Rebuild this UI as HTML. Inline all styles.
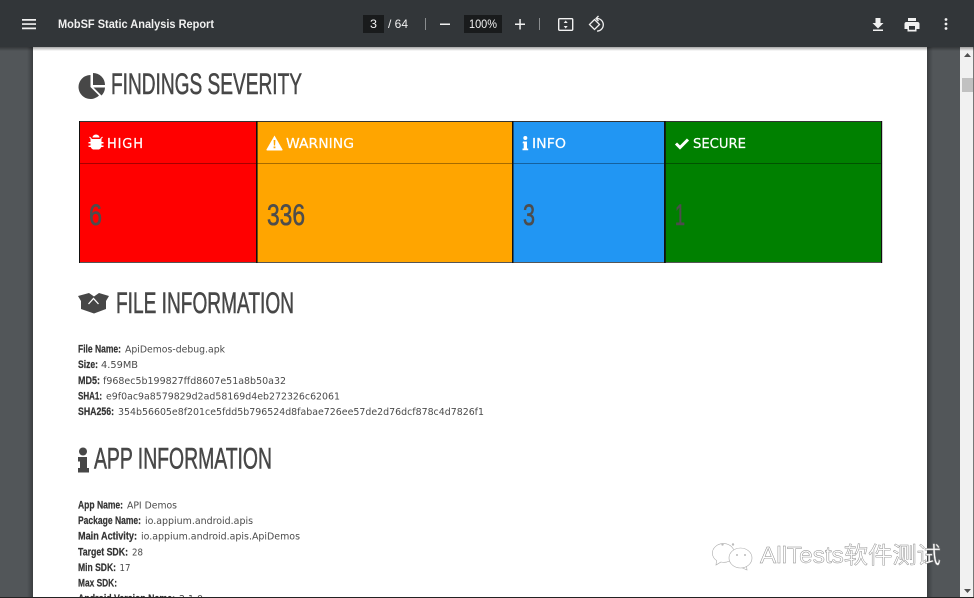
<!DOCTYPE html>
<html><head><meta charset="utf-8"><title>MobSF Static Analysis Report</title>
<style>
html,body{margin:0;padding:0;width:974px;height:598px;overflow:hidden;background:#525659}
svg{display:block}
.h{font-family:"Liberation Sans",sans-serif;font-size:30px;fill:#474747;stroke:#474747;stroke-width:.55}
.n{font-family:"Liberation Sans",sans-serif;font-size:30px;fill:#4d4d4d;stroke:#4d4d4d;stroke-width:.6}
.l{font-family:"Liberation Sans",sans-serif;font-weight:bold;font-size:11px;fill:#333;stroke:#333;stroke-width:.2}
.v{font-family:"DejaVu Sans",sans-serif;font-size:10px;fill:#4a4a4a}
.c{font-family:"DejaVu Sans",sans-serif;font-size:13px;fill:#fff;stroke:#fff;stroke-width:.2}
.t{font-family:"Liberation Sans",sans-serif;font-size:12px;fill:#f1f1f1}
</style></head><body>
<svg width="974" height="598" viewBox="0 0 974 598" xmlns="http://www.w3.org/2000/svg">
<defs>
<linearGradient id="s" x1="0" x2="0" y1="0" y2="1"><stop offset="0" stop-color="#000" stop-opacity=".35"/><stop offset="1" stop-color="#000" stop-opacity="0"/></linearGradient>
<linearGradient id="g1" x1="0" x2="1" y1="0" y2="0"><stop offset="0" stop-color="#000" stop-opacity="0"/><stop offset="1" stop-color="#000" stop-opacity=".28"/></linearGradient>
<linearGradient id="g2" x1="0" x2="1" y1="0" y2="0"><stop offset="0" stop-color="#000" stop-opacity=".28"/><stop offset="1" stop-color="#000" stop-opacity="0"/></linearGradient>
</defs>
<rect width="974" height="598" fill="#525659"/>
<rect x="27" y="47" width="6" height="551" fill="url(#g1)"/>
<rect x="927" y="47" width="6" height="551" fill="url(#g2)"/>
<rect x="33" y="47" width="894" height="551" fill="#fff"/>
<rect x="960" y="47" width="14" height="551" fill="#f1f1f1"/>
<rect x="962" y="78" width="12" height="14" fill="#c1c1c1"/>
<path d="M964 57h7l-3.500-4z" fill="#505050"/>
<path d="M964 589h7l-3.500 4z" fill="#505050"/>
<rect x="973" y="0" width="1" height="598" fill="#777"/>

<rect x="0" y="47" width="974" height="4" fill="url(#s)"/>
<rect width="974" height="47" fill="#323639"/>

<!-- toolbar -->
<path d="M22 19h14v1.700H22zM22 23.200h14v1.700H22zM22 27.500h14v1.700H22z" fill="#f1f1f1"/>
<text x="58" y="28" class="t" font-weight="bold" textLength="156" lengthAdjust="spacingAndGlyphs">MobSF Static Analysis Report</text>
<rect x="363" y="15" width="21" height="18" fill="#191b1c"/>
<text x="370" y="28" class="t" textLength="7" lengthAdjust="spacingAndGlyphs">3</text>
<text x="388" y="28" class="t" textLength="20" lengthAdjust="spacingAndGlyphs">/ 64</text>
<rect x="425" y="18" width="1" height="12" fill="#8a8d8f"/>
<rect x="440" y="23.500" width="10" height="1.500" fill="#f1f1f1"/>
<rect x="464" y="15" width="38" height="18" fill="#191b1c"/>
<text x="469" y="28" class="t" textLength="28" lengthAdjust="spacingAndGlyphs">100%</text>
<path d="M515 23.500h10v1.500h-10zM519.300 19h1.500v10.500h-1.500z" fill="#f1f1f1"/>
<rect x="539" y="18" width="1" height="12" fill="#8a8d8f"/>
<rect x="558.700" y="18.700" width="14" height="11.600" rx="1" fill="none" stroke="#f1f1f1" stroke-width="1.400"/>
<path d="M565.700 20.500l-2 2.500h4zM565.700 28.500l-2-2.500h4z" fill="#f1f1f1"/>
<path d="M598.500 16l-2.500 2.500 2.500 2.500" fill="none" stroke="#f1f1f1" stroke-width="1.300"/>
<path d="M597 18.500a6.300 6.300 0 0 1 0 12.600" fill="none" stroke="#f1f1f1" stroke-width="1.300"/>
<path d="M594.500 19.500l5 5-5 5-5-5z" fill="none" stroke="#f1f1f1" stroke-width="1.300"/>
<path d="M875.500 18h5v5h3l-5.500 5.500-5.500-5.500h3zM873 29.500h10v1.500h-10z" fill="#f1f1f1"/>
<path d="M908 18h8v3h-8zM906.500 22h11a2 2 0 0 1 2 2v5h-3v2.500h-9V29h-3v-5a2 2 0 0 1 2-2zM909 26v3.800h6V26z" fill="#f1f1f1" fill-rule="evenodd"/>
<circle cx="946" cy="19.500" r="1.400" fill="#f1f1f1"/><circle cx="946" cy="24" r="1.400" fill="#f1f1f1"/><circle cx="946" cy="28.500" r="1.400" fill="#f1f1f1"/>

<!-- findings -->
<path d="M90.500 75a12 12 0 1 0 8.500 20.500l-8.500-8.500z" fill="#474747"/>
<path d="M93 73a12 12 0 0 1 12 12H93z" fill="#474747"/>
<path d="M93.500 87.500h11.500a12 12 0 0 1-3.500 8z" fill="#474747"/>
<text x="111" y="94" class="h" textLength="191" lengthAdjust="spacingAndGlyphs">FINDINGS SEVERITY</text>

<rect x="79" y="121" width="178" height="142" fill="#f00"/>
<rect x="257" y="121" width="256" height="142" fill="#ffa500"/>
<rect x="513" y="121" width="152" height="142" fill="#2196f3"/>
<rect x="665" y="121" width="217" height="142" fill="#008000"/>
<rect x="79" y="163" width="803" height="1" fill="#000" opacity=".35"/>
<rect x="79" y="121" width="803" height="1" fill="#333"/>
<rect x="79" y="262" width="803" height="1" fill="#555"/>
<rect x="79" y="121" width="1" height="142" fill="#111"/>
<rect x="256" y="121" width="1.600" height="142" fill="#111"/>
<rect x="512" y="121" width="1.500" height="142" fill="#111"/>
<rect x="664" y="121" width="1.800" height="142" fill="#111"/>
<rect x="881" y="121" width="1.200" height="142" fill="#111"/>

<!-- bug -->
<path d="M92.500 137.500a3.500 3 0 0 1 7 0zM90.500 139h11v3h2v1.500h-2v2h2v1.500h-2.200a5 4 0 0 1-2.300 2.500h-6a5 4 0 0 1-2.300-2.500h-2.200v-1.500h2v-2h-2V142h2z" fill="#fff"/>
<path d="M89.500 137l2 2M102.500 137l-2 2" stroke="#fff" stroke-width="1"/>
<text x="107" y="148" class="c" textLength="36" lengthAdjust="spacing">HIGH</text>
<!-- warning -->
<path d="M274.500 135.500l8 14a.7.700 0 0 1-.6 1h-14.800a.7.700 0 0 1-.6-1z" fill="#fff"/>
<path d="M273.600 140h1.800l-.3 5.500h-1.200zM273.600 146.500h1.800v1.800h-1.800z" fill="#ffa500"/>
<text x="286" y="148" class="c" textLength="68" lengthAdjust="spacingAndGlyphs">WARNING</text>
<!-- info -->
<circle cx="525.300" cy="138" r="2" fill="#fff"/>
<path d="M523 141.500h4v7h1.200v1.800h-5.700v-1.800h1.200v-5.200h-1.200z" fill="#fff"/>
<text x="532" y="148" class="c" textLength="34" lengthAdjust="spacingAndGlyphs">INFO</text>
<!-- check -->
<path d="M676 143.500l4 4 8-8" fill="none" stroke="#fff" stroke-width="3"/>
<text x="693" y="148" class="c" textLength="53" lengthAdjust="spacingAndGlyphs">SECURE</text>

<text x="89" y="225" class="n" textLength="13" lengthAdjust="spacingAndGlyphs">6</text>
<text x="267" y="225" class="n" textLength="38" lengthAdjust="spacingAndGlyphs">336</text>
<text x="523" y="225" class="n" textLength="12" lengthAdjust="spacingAndGlyphs">3</text>
<text x="675" y="225" class="n" textLength="10" lengthAdjust="spacingAndGlyphs">1</text>

<!-- file info -->
<path d="M78 296L89 293L94 296.500L99 293L109 296L106 301V309L94 313.500L81 309V301Z" fill="#474747"/>
<path d="M88.500 304L93.500 298.500L98.500 304" fill="none" stroke="#fff" stroke-width="1.300"/>
<text x="116" y="313" class="h" textLength="178" lengthAdjust="spacingAndGlyphs">FILE INFORMATION</text>

<text x="78" y="352.500" class="l" textLength="43" lengthAdjust="spacingAndGlyphs">File Name:</text>
<text x="125" y="352.500" class="v" textLength="100" lengthAdjust="spacingAndGlyphs">ApiDemos-debug.apk</text>
<text x="78" y="368" class="l" textLength="20" lengthAdjust="spacingAndGlyphs">Size:</text>
<text x="101" y="368" class="v" textLength="37" lengthAdjust="spacingAndGlyphs">4.59MB</text>
<text x="78" y="384" class="l" textLength="22" lengthAdjust="spacingAndGlyphs">MD5:</text>
<text x="103" y="384" class="v" textLength="183" lengthAdjust="spacingAndGlyphs">f968ec5b199827ffd8607e51a8b50a32</text>
<text x="78" y="399.500" class="l" textLength="24" lengthAdjust="spacingAndGlyphs">SHA1:</text>
<text x="106" y="399.500" class="v" textLength="234" lengthAdjust="spacingAndGlyphs">e9f0ac9a8579829d2ad58169d4eb272326c62061</text>
<text x="78" y="415" class="l" textLength="36" lengthAdjust="spacingAndGlyphs">SHA256:</text>
<text x="118" y="415" class="v" textLength="366" lengthAdjust="spacingAndGlyphs">354b56605e8f201ce5fdd5b796524d8fabae726ee57de2d76dcf878c4d7826f1</text>

<!-- app info -->
<circle cx="83" cy="451.500" r="4" fill="#474747"/>
<path d="M78 457h9v11h2v4.500H78V468h2v-6.500h-2z" fill="#474747"/>
<text x="94" y="468.500" class="h" textLength="178" lengthAdjust="spacingAndGlyphs">APP INFORMATION</text>

<text x="78" y="508.500" class="l" textLength="45" lengthAdjust="spacingAndGlyphs">App Name:</text>
<text x="127" y="508.500" class="v" textLength="50" lengthAdjust="spacingAndGlyphs">API Demos</text>
<text x="78" y="524" class="l" textLength="63" lengthAdjust="spacingAndGlyphs">Package Name:</text>
<text x="145" y="524" class="v" textLength="108" lengthAdjust="spacingAndGlyphs">io.appium.android.apis</text>
<text x="78" y="539.500" class="l" textLength="59" lengthAdjust="spacingAndGlyphs">Main Activity:</text>
<text x="141" y="539.500" class="v" textLength="159" lengthAdjust="spacingAndGlyphs">io.appium.android.apis.ApiDemos</text>
<text x="78" y="555.500" class="l" textLength="50" lengthAdjust="spacingAndGlyphs">Target SDK:</text>
<text x="132" y="555.500" class="v" textLength="11" lengthAdjust="spacingAndGlyphs">28</text>
<text x="78" y="571" class="l" textLength="38" lengthAdjust="spacingAndGlyphs">Min SDK:</text>
<text x="119.500" y="571" class="v" textLength="11" lengthAdjust="spacingAndGlyphs">17</text>
<text x="78" y="586.500" class="l" textLength="39" lengthAdjust="spacingAndGlyphs">Max SDK:</text>
<text x="78" y="602" class="l" textLength="97" lengthAdjust="spacingAndGlyphs">Android Version Name:</text>
<text x="179" y="602" class="v" textLength="24" lengthAdjust="spacingAndGlyphs">2.1.0</text>
<rect x="0" y="597" width="974" height="1" fill="#222"/>

<!-- watermark -->
<g fill="#fff" stroke="#aaa" stroke-width=".6">
<path d="M716 565l.5-4.500a11 9.500 0 1 1 13 .5a11 9.500 0 0 1-8.500 1z"/>
<path d="M747 570l-.5-4a11 9.500 0 1 0-5 1.500z"/>
<ellipse cx="740.500" cy="558" rx="11.500" ry="10"/>
</g>
<g fill="#bbb"><circle cx="722.500" cy="544.500" r="1.200"/><circle cx="733" cy="544.500" r="1.200"/><circle cx="737" cy="555" r="1"/><circle cx="745" cy="555" r="1"/></g>
<text x="760" y="563" font-family="'Liberation Sans','Noto Sans CJK SC',sans-serif" font-size="23" fill="#fff" stroke="#8a8a8a" stroke-width=".45" textLength="181" lengthAdjust="spacingAndGlyphs">AllTests软件测试</text>
</svg>
</body></html>
